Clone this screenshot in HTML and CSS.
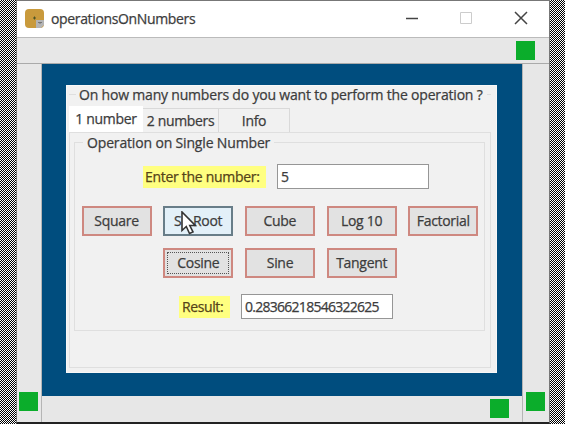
FILE: index.html
```html
<!DOCTYPE html>
<html lang="en">
<head>
<meta charset="utf-8">
<title>operationsOnNumbers</title>
<link rel="stylesheet" href="styles.css">
</head>
<body>
<main class="window">
  <header class="titlebar">
    <svg class="app-icon" width="20" height="20" viewBox="0 0 20 20"><rect width="19" height="19" rx="4" fill="#c99a3c"/><path d="M9.500 7.500v3M8 9h3" stroke="#4d5426"/><path d="M11 11h8v5l-3 3h-5z" fill="#b4b4b4"/><path d="M13 13.500h4M15 13v2" stroke="#777"/></svg>
    <h1 class="title"><span>operationsOnNumbers</span></h1>
    <svg class="controls" width="126" height="20" viewBox="0 0 126 20" fill="none"><path d="M1 9.500h12" stroke="#444" stroke-width="1.500"/><path d="M55.500 3.500h11v11h-11z" stroke="#ccc"/><path d="M110 3l12 12M122 3l-12 12" stroke="#444" stroke-width="1.500"/></svg>
  </header>
  <div class="strip top"><i class="block"></i></div>
  <div class="body">
    <div class="side left"><i class="block"></i></div>
    <div class="center">
      <div class="stage">
        <section class="panel">
          <h2 class="legend outer"><span class="t-question">On how many numbers do you want to perform the operation ?</span></h2>
          <nav class="tabs">
            <div class="tab active"><span>1 number</span></div>
            <div class="tab second"><span>2 numbers</span></div>
            <div class="tab info"><span>Info</span></div>
          </nav>
          <div class="page">
            <div class="group">
              <h3 class="legend inner"><span class="t-group">Operation on Single Number</span></h3>
              <div class="row entry"><label class="mark"><span>Enter the number:</span></label><div class="field">5</div></div>
              <div class="row buttons">
                <div class="btn"><span>Square</span></div>
                <div class="btn hover"><span>Sq Root</span></div>
                <div class="btn"><span>Cube</span></div>
                <div class="btn"><span>Log 10</span></div>
                <div class="btn"><span>Factorial</span></div>
              </div>
              <div class="row buttons">
                <div class="btn focus"><span>Cosine</span></div>
                <div class="btn"><span>Sine</span></div>
                <div class="btn"><span>Tangent</span></div>
              </div>
              <div class="row result"><label class="mark short"><span>Result:</span></label><div class="field"><span class="t-value">0.28366218546322625</span></div></div>
            </div>
          </div>
        </section>
      </div>
      <div class="strip bottom"><i class="block"></i></div>
    </div>
    <div class="side right"><i class="block"></i></div>
  </div>
</main>
<svg class="cursor" width="16" height="25" viewBox="0 0 16 25"><path d="M1 1v18.500l4.300-4 3.200 7 3.500-1.600-3.200-6.400h5.500z" fill="#fff" stroke="#333" stroke-width="1.600"/></svg>
</body>
</html>
```
FILE: styles.css
```css
* { box-sizing: border-box; }
body {
  margin: 0;
  height: 424px;
  overflow: hidden;
  padding: 0 15px 0 16px;
  background: repeating-conic-gradient(#000 0 25%, #fff 0 50%) 0 0 / 2px 2px;
  font: 14px/20px "Open Sans", "Noto Sans", sans-serif;
  color: #3c3c3c;
  -webkit-text-stroke: .25px;
}
h1, h2, h3 { margin: 0; font: inherit; }
span { white-space: nowrap; }
.window {
  display: flex;
  flex-direction: column;
  width: 534px;
  height: 424px;
  border: 1px solid #777;
  border-bottom: 2px solid #222;
  background: #e7e7e7;
}
.titlebar {
  display: flex;
  align-items: center;
  height: 36px;
  padding: 0 18px 0 8px;
  background: #fff;
}
.app-icon { margin: -1px 6px 0 0; }
.title { flex: 1; letter-spacing: -.35px; }
.strip { display: flex; justify-content: flex-end; }
.strip.top {
  height: 27px;
  padding: 3px 14px 0 0;
  border-top: 1px solid #bbb;
  border-bottom: 1px solid #aaa;
}
.block { display: block; width: 19px; height: 19px; background: #0bad2b; }
.body { display: flex; flex: 1; }
.side { flex: none; display: flex; flex-direction: column; justify-content: flex-end; padding-bottom: 11px; }
.left { width: 25px; padding-left: 2px; border-right: 1px solid #b5b5b5; }
.right { width: 27px; padding-left: 3px; border-left: 1px solid #b5b5b5; }
.center { flex: 1; min-width: 0; display: flex; flex-direction: column; }
.stage { height: 332px; padding: 21px 25px 23px 24px; background: #004d7e; }
.strip.bottom { flex: 1; padding: 3px 13px 0 0; }
.panel {
  display: flex;
  flex-direction: column;
  height: 288px;
  padding: 0 5px 4px 2px;
  background: #f1f1f1;
  border: 1px solid #f8f8f8;
}
.legend { display: flex; align-items: center; height: 19px; }
.legend::before, .legend::after { content: ""; height: 1px; background: #dfdfdf; }
.legend::after { flex: 1; margin-left: 4px; }
.outer { padding-bottom: 2px; }
.outer::before { width: 7px; margin-right: 3px; }
.t-question { letter-spacing: -.19px; }
.tabs { display: flex; align-items: flex-end; height: 27px; }
.tab {
  display: flex;
  justify-content: center;
  align-items: center;
  height: 24px;
  border: 1px solid #d9d9d9;
  border-width: 1px 1px 0 0;
  letter-spacing: -.33px;
}
.tab.active { width: 74px; height: 26px; background: #fff; border: 0; }
.tab.second { width: 76px; }
.tab.info { width: 71px; }
.page { flex: 1; border: 1px solid #dfdfdf; padding: 0 5px 0 4px; }
.group {
  height: 198px;
  background: linear-gradient(#dfdfdf, #dfdfdf) 0 9px / 1px 189px no-repeat,
    linear-gradient(#dfdfdf, #dfdfdf) 100% 9px / 1px 189px no-repeat,
    linear-gradient(#dfdfdf, #dfdfdf) 0 100% / 100% 1px no-repeat;
}
.inner::before { width: 9px; margin-right: 4px; }
.t-group { letter-spacing: -.16px; }
.row { display: flex; align-items: center; }
.entry { height: 25px; margin: 12px 0 0 69px; gap: 11px; }
.mark { flex: none; width: 123px; height: 22px; padding: 1px 0 0 2px; background: #ffff80; color: #554318; letter-spacing: -.3px; }
.mark.short { width: 51px; padding-left: 3px; letter-spacing: -.4px; }
.field { width: 152px; height: 25px; border: 1px solid #969696; background: #fff; padding: 2px 3px 1px; }
.t-value { letter-spacing: -.73px; }
.buttons { gap: 11.7px; margin: 17px 0 0 7.5px; }
.buttons + .buttons { margin: 12px 0 0 89.3px; }
.btn {
  flex: none;
  display: flex;
  justify-content: center;
  align-items: center;
  width: 70px;
  height: 30px;
  border: 2px solid #ce8880;
  background: #e2e2e2;
  letter-spacing: -.3px;
}
.btn.hover { border-color: #687d88; background: #e3f0f8; }
.btn.focus { outline: 1px dotted #555; outline-offset: -5px; }
.result { height: 25px; margin: 16px 0 0 105px; gap: 11px; }
.cursor { position: absolute; left: 181px; top: 211px; }
```
